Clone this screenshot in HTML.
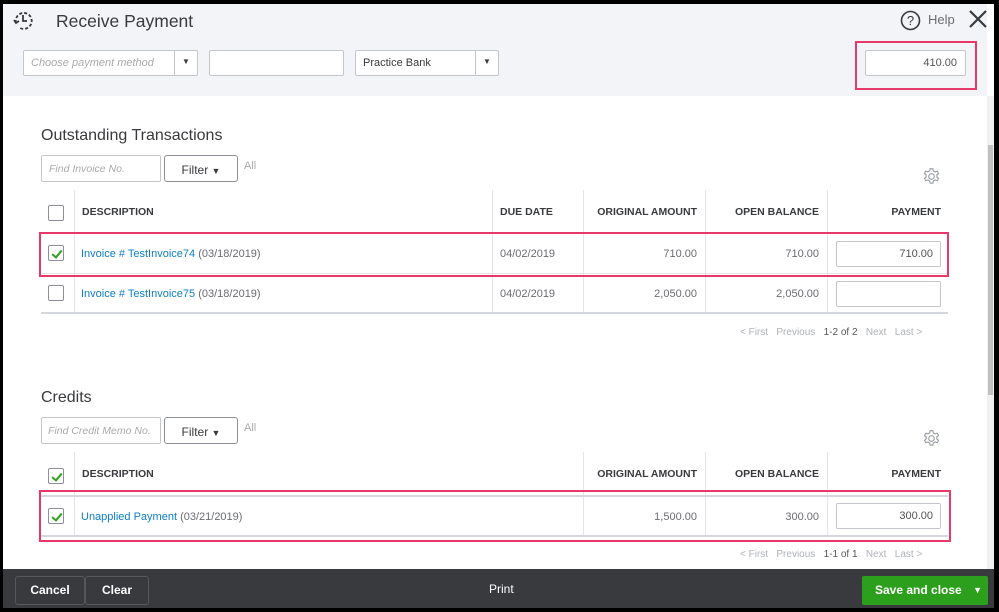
<!DOCTYPE html>
<html><head><meta charset="utf-8"><style>
*{box-sizing:border-box;margin:0;padding:0}
body{width:999px;height:612px;position:relative;overflow:hidden;background:#000;font-family:"Liberation Sans",sans-serif;color:#393a3d}
.a{position:absolute}
.inp{position:absolute;background:#fff;border:1px solid #c4c6cb;border-radius:2px;font-size:11px}
.t{position:absolute;font-size:10.5px;font-weight:bold;color:#393a3d}
.c{position:absolute;font-size:11px;color:#6b6c72}
.lnk{color:#0d7fc5}
.cb{position:absolute;width:16px;height:16px;border:1px solid #8d9096;border-radius:2px;background:#fff}
.cb.on{border-color:#8d9096;background:#fff}
.cb.on:after{content:"";position:absolute;left:5px;top:2px;width:4px;height:8px;border:solid #2ca01c;border-width:0 2px 2px 0;transform:rotate(40deg)}
.vl{position:absolute;width:1px;background:#e3e5e8}
.hl{position:absolute;height:1px;background:#e3e5e8}
.red{position:absolute;border:2px solid #e8386a}
.pg{position:absolute;font-size:10px;color:#b0b3b8}
.btn{position:absolute;border:1px solid #8d9096;border-radius:3px;background:#fff;font-size:12px;text-align:center;color:#393a3d}
</style></head><body>
<div class="a" style="left:3px;top:4px;width:991px;height:604px;background:#fff"></div>
<div class="a" style="left:3px;top:4px;width:984px;height:92px;background:#f3f4f8"></div>
<div class="a" style="left:987px;top:96px;width:7px;height:473px;background:#f1f1f1"></div>
<div class="a" style="left:988px;top:145px;width:5px;height:250px;background:#c1c1c1"></div>
<svg class="a" style="left:12px;top:9px" width="22" height="22" viewBox="0 0 22 22" fill="none" stroke="#393a3d" stroke-width="1.8"><path d="M4 14a8 8 0 1 1 4 5" stroke-dasharray="3 2"/><path d="M11 6v6h4"/><path d="M2 11l2 3 3-2"/></svg>
<div class="a" style="left:56px;top:11px;font-size:17.5px;color:#393a3d">Receive Payment</div>
<svg class="a" style="left:900px;top:10px" width="21" height="21" viewBox="0 0 21 21"><circle cx="10.5" cy="10.5" r="9" fill="none" stroke="#393a3d" stroke-width="1.6"/><text x="10.5" y="15" text-anchor="middle" font-size="13" font-family="Liberation Sans" fill="#393a3d">?</text></svg>
<div class="a" style="left:928px;top:12px;font-size:13px;color:#6b6c72">Help</div>
<svg class="a" style="left:968px;top:9px" width="20" height="20"><path d="M2 2L18 18M18 2L2 18" stroke="#393a3d" stroke-width="2.2"/></svg>
<div class="inp" style="left:23px;top:50px;width:175px;height:26px"><span class="a" style="left:7px;top:6px;color:#aaa;font-style:italic">Choose payment method</span><span class="a" style="left:150px;top:0;width:1px;height:24px;background:#c4c6cb"></span><span class="a" style="left:158px;top:6px;font-size:8px">▼</span></div>
<div class="inp" style="left:209px;top:50px;width:135px;height:26px"></div>
<div class="inp" style="left:355px;top:50px;width:144px;height:26px"><span class="a" style="left:7px;top:6px;color:#393a3d">Practice Bank</span><span class="a" style="left:119px;top:0;width:1px;height:24px;background:#c4c6cb"></span><span class="a" style="left:127px;top:6px;font-size:8px">▼</span></div>
<div class="red" style="left:855px;top:41px;width:122px;height:49px"></div>
<div class="inp" style="left:865px;top:50px;width:101px;height:26px"><span class="a" style="right:8px;top:6px;color:#555">410.00</span></div>

<div class="a" style="left:41px;top:127px;font-size:16px">Outstanding Transactions</div>
<div class="inp" style="left:41px;top:155px;width:120px;height:27px"><span class="a" style="left:7px;top:7px;color:#aaa;font-style:italic;font-size:10.5px">Find Invoice No.</span></div>
<div class="btn" style="left:164px;top:155px;width:74px;height:27px;padding-top:7px">Filter <span style="font-size:9px">▼</span></div>
<div class="a" style="left:244px;top:160px;font-size:11px;color:#aaa">All</div>
<svg class="a" style="left:922px;top:167px" width="19" height="19" viewBox="0 0 17 17" fill="none" stroke="#9a9da3" stroke-width="1"><circle cx="8.5" cy="8.5" r="2.5"/><path d="M7.3 1.5h2.4l.4 2 1.6.9 1.9-.7 1.2 2.1-1.5 1.3v1.8l1.5 1.3-1.2 2.1-1.9-.7-1.6.9-.4 2H7.3l-.4-2-1.6-.9-1.9.7-1.2-2.1 1.5-1.3V7.1L2.2 5.8l1.2-2.1 1.9.7 1.6-.9z"/></svg>

<div class="vl" style="left:74px;top:190px;height:123px"></div>
<div class="vl" style="left:492px;top:190px;height:123px"></div>
<div class="vl" style="left:583px;top:190px;height:123px"></div>
<div class="vl" style="left:705px;top:190px;height:123px"></div>
<div class="vl" style="left:827px;top:190px;height:123px"></div>
<div class="cb" style="left:48px;top:205px"></div>
<div class="t" style="left:82px;top:206px">DESCRIPTION</div>
<div class="t" style="left:500px;top:206px">DUE DATE</div>
<div class="t" style="left:583px;top:206px;width:114px;text-align:right">ORIGINAL AMOUNT</div>
<div class="t" style="left:705px;top:206px;width:114px;text-align:right">OPEN BALANCE</div>
<div class="t" style="left:827px;top:206px;width:114px;text-align:right">PAYMENT</div>
<div class="hl" style="left:41px;top:233px;width:907px"></div>
<div class="hl" style="left:41px;top:273px;width:907px"></div>
<div class="hl" style="left:41px;top:312px;width:907px;height:2px;background:#d4d7dc"></div>
<div class="cb on" style="left:48px;top:245px"></div>
<div class="c" style="left:81px;top:248px"><span class="lnk">Invoice # TestInvoice74</span> (03/18/2019)</div>
<div class="c" style="left:500px;top:248px">04/02/2019</div>
<div class="c" style="left:583px;top:248px;width:114px;text-align:right">710.00</div>
<div class="c" style="left:705px;top:248px;width:114px;text-align:right">710.00</div>
<div class="inp" style="left:836px;top:241px;width:105px;height:26px"><span class="a" style="right:7px;top:6px;color:#555">710.00</span></div>
<div class="cb" style="left:48px;top:285px"></div>
<div class="c" style="left:81px;top:288px"><span class="lnk">Invoice # TestInvoice75</span> (03/18/2019)</div>
<div class="c" style="left:500px;top:288px">04/02/2019</div>
<div class="c" style="left:583px;top:288px;width:114px;text-align:right">2,050.00</div>
<div class="c" style="left:705px;top:288px;width:114px;text-align:right">2,050.00</div>
<div class="inp" style="left:836px;top:281px;width:105px;height:26px"></div>
<div class="red" style="left:39px;top:232px;width:910px;height:45px"></div>
<div class="pg" style="left:740px;top:327px">&lt; First &nbsp; Previous &nbsp; <span style="color:#555">1-2 of 2</span> &nbsp; Next &nbsp; Last &gt;</div>

<div class="a" style="left:41px;top:389px;font-size:16px">Credits</div>
<div class="inp" style="left:41px;top:417px;width:120px;height:27px"><span class="a" style="left:6px;top:7px;color:#aaa;font-style:italic;font-size:10.5px">Find Credit Memo No.</span></div>
<div class="btn" style="left:164px;top:417px;width:74px;height:27px;padding-top:7px">Filter <span style="font-size:9px">▼</span></div>
<div class="a" style="left:244px;top:422px;font-size:11px;color:#aaa">All</div>
<svg class="a" style="left:922px;top:429px" width="19" height="19" viewBox="0 0 17 17" fill="none" stroke="#9a9da3" stroke-width="1"><circle cx="8.5" cy="8.5" r="2.5"/><path d="M7.3 1.5h2.4l.4 2 1.6.9 1.9-.7 1.2 2.1-1.5 1.3v1.8l1.5 1.3-1.2 2.1-1.9-.7-1.6.9-.4 2H7.3l-.4-2-1.6-.9-1.9.7-1.2-2.1 1.5-1.3V7.1L2.2 5.8l1.2-2.1 1.9.7 1.6-.9z"/></svg>
<div class="vl" style="left:74px;top:452px;height:84px"></div>
<div class="vl" style="left:583px;top:452px;height:84px"></div>
<div class="vl" style="left:705px;top:452px;height:84px"></div>
<div class="vl" style="left:827px;top:452px;height:84px"></div>
<div class="cb on" style="left:48px;top:468px"></div>
<div class="t" style="left:82px;top:468px">DESCRIPTION</div>
<div class="t" style="left:583px;top:468px;width:114px;text-align:right">ORIGINAL AMOUNT</div>
<div class="t" style="left:705px;top:468px;width:114px;text-align:right">OPEN BALANCE</div>
<div class="t" style="left:827px;top:468px;width:114px;text-align:right">PAYMENT</div>
<div class="hl" style="left:41px;top:495px;width:907px;height:2px;background:#d4d7dc"></div>
<div class="hl" style="left:41px;top:535px;width:907px;height:2px;background:#d4d7dc"></div>
<div class="cb on" style="left:48px;top:508px"></div>
<div class="c" style="left:81px;top:511px"><span class="lnk">Unapplied Payment</span> (03/21/2019)</div>
<div class="c" style="left:583px;top:511px;width:114px;text-align:right">1,500.00</div>
<div class="c" style="left:705px;top:511px;width:114px;text-align:right">300.00</div>
<div class="inp" style="left:836px;top:503px;width:105px;height:26px"><span class="a" style="right:7px;top:6px;color:#555">300.00</span></div>
<div class="red" style="left:39px;top:490px;width:912px;height:52px"></div>
<div class="pg" style="left:740px;top:549px">&lt; First &nbsp; Previous &nbsp; <span style="color:#555">1-1 of 1</span> &nbsp; Next &nbsp; Last &gt;</div>

<div class="a" style="left:3px;top:569px;width:991px;height:39px;background:#393a3d"></div>
<div class="a" style="left:15px;top:576px;width:70px;height:29px;border:1px solid #55575b;border-radius:3px;background:#393a3d;color:#fff;font-size:12px;font-weight:bold;text-align:center;line-height:27px">Cancel</div>
<div class="a" style="left:85px;top:576px;width:64px;height:29px;border:1px solid #55575b;border-radius:3px;background:#393a3d;color:#fff;font-size:12px;font-weight:bold;text-align:center;line-height:27px">Clear</div>
<div class="a" style="left:489px;top:582px;color:#fff;font-size:12px">Print</div>
<div class="a" style="left:862px;top:576px;width:126px;height:29px;background:#2ca01c;border-radius:2px;color:#fff;font-size:12px;font-weight:bold;line-height:29px;padding-left:13px">Save and close <span style="position:absolute;right:6px;font-size:9px">▼</span></div>
</body></html>
